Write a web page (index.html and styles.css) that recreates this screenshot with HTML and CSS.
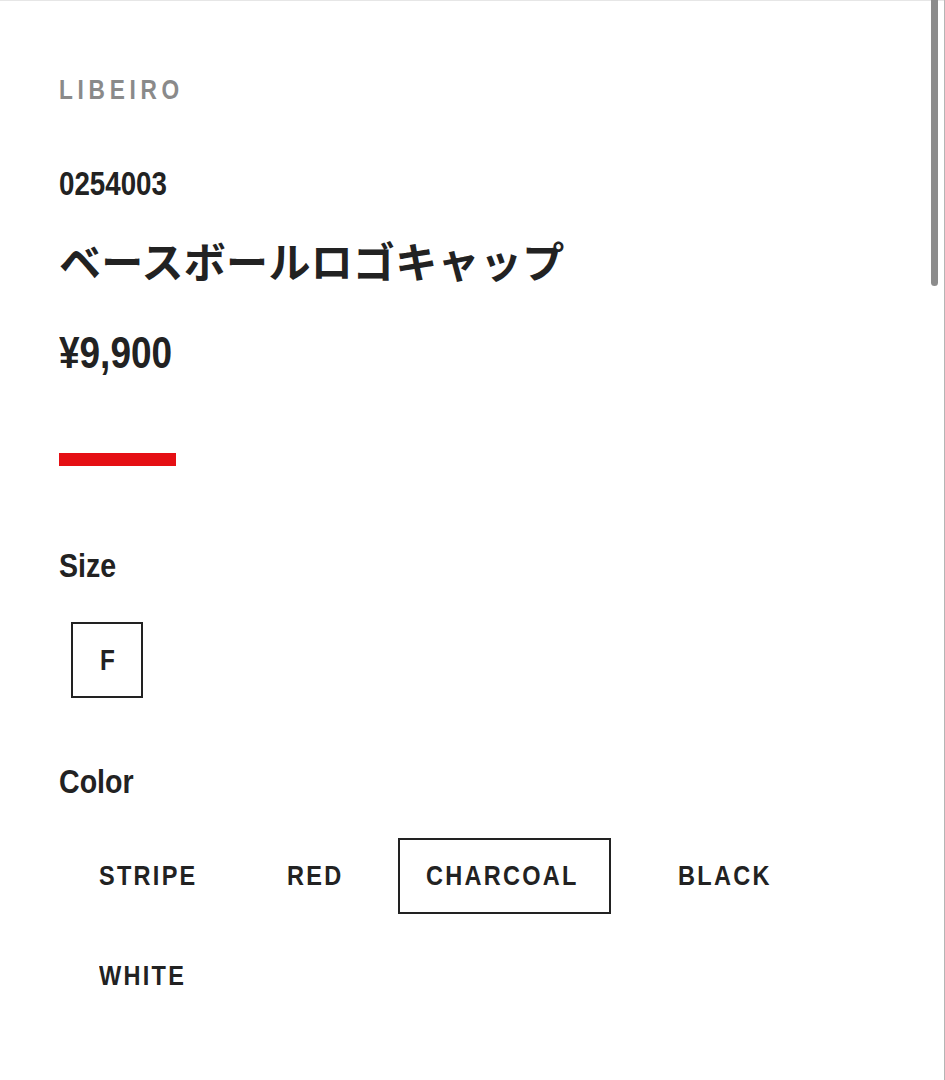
FILE: index.html
```html
<!DOCTYPE html>
<html lang="ja">
<head>
<meta charset="utf-8">
<title>ベースボールロゴキャップ</title>
<link rel="stylesheet" href="styles.css">
</head>
<body>
<main class="product">
  <p class="brand cond">LIBEIRO</p>
  <p class="code cond">0254003</p>
  <h1 class="name">ベースボールロゴキャップ</h1>
  <p class="price cond">¥9,900</p>
  <div class="accent"></div>

  <section class="option-group">
    <h2 class="option-title cond">Size</h2>
    <ul class="size-list">
      <li class="size-item is-selected"><span class="cond-inline">F</span></li>
    </ul>
  </section>

  <section class="option-group">
    <h2 class="option-title color-title cond">Color</h2>
    <ul class="color-list">
      <li class="color-item"><span class="cond-inline">STRIPE</span></li>
      <li class="color-item"><span class="cond-inline">RED</span></li>
      <li class="color-item is-selected"><span class="cond-inline">CHARCOAL</span></li>
      <li class="color-item"><span class="cond-inline">BLACK</span></li>
      <li class="color-item"><span class="cond-inline">WHITE</span></li>
    </ul>
  </section>
</main>
<div class="scrollbar"><div class="scrollbar-thumb"></div></div>
</body>
</html>
```

FILE: styles.css
```css
* { box-sizing: border-box; }
html, body { margin: 0; padding: 0; background: #fff; }
body {
  font-family: "Liberation Sans", Arial, sans-serif;
  font-weight: 700;
  color: #222;
  height: 1080px;
  overflow: hidden;
  border-top: 1px solid #e6e6e6;
}
.product {
  padding: 76px 0 0 59px;
}
p, h1, h2, ul { margin: 0; padding: 0; }
ul { list-style: none; }

/* condensed look: Helvetica Condensed substitute */
.cond {
  transform: scaleX(0.84);
  transform-origin: left center;
}
.cond-inline {
  display: inline-block;
  transform: scaleX(0.84);
  transform-origin: left center;
}

.brand {
  font-size: 27px;
  line-height: 27px;
  letter-spacing: 5.6px;
  color: #8a8a8a;
}
.code {
  margin-top: 63px;
  font-size: 33px;
  line-height: 33px;
}
.name {
  margin-top: 30px;
  font-family: "Noto Sans CJK JP", sans-serif;
  font-weight: 700;
  font-size: 42px;
  line-height: 60px;
  letter-spacing: 0.3px;
}
.price {
  margin-top: 41px;
  font-size: 44px;
  line-height: 44px;
}
.accent {
  margin-top: 78px;
  width: 117px;
  height: 13px;
  background: #e50f14;
}
.option-group { display: flex; flex-direction: column; }
.option-title {
  margin-top: 82px;
  font-size: 34px;
  line-height: 34px;
}
.color-title { margin-top: 66px; }

.size-list {
  margin-top: 40px;
  margin-left: 12px;
  display: flex;
}
.size-item {
  width: 72px;
  height: 76px;
  border: 2px solid #222;
  display: flex;
  align-items: center;
  justify-content: center;
  padding-left: 4px;
  font-size: 29px;
}
.color-list {
  margin-top: 40px;
  margin-left: 12px;
  display: flex;
  flex-wrap: wrap;
  gap: 24px 39px;
  width: 790px;
}
.color-item {
  height: 76px;
  padding: 0 2px 0 26px;
  border: 2px solid transparent;
  display: flex;
  align-items: center;
  font-size: 28px;
  letter-spacing: 2.7px;
}
.color-item.is-selected { border-color: #222; }

.scrollbar {
  position: fixed;
  top: 0;
  right: 0;
  width: 15px;
  height: 1080px;
  border-right: 1px solid #b5b5b5;
}
.scrollbar-thumb {
  position: absolute;
  top: 0;
  left: 1px;
  width: 7px;
  height: 286px;
  border-radius: 0 0 4px 4px;
  background: #8c8c8c;
}
```
